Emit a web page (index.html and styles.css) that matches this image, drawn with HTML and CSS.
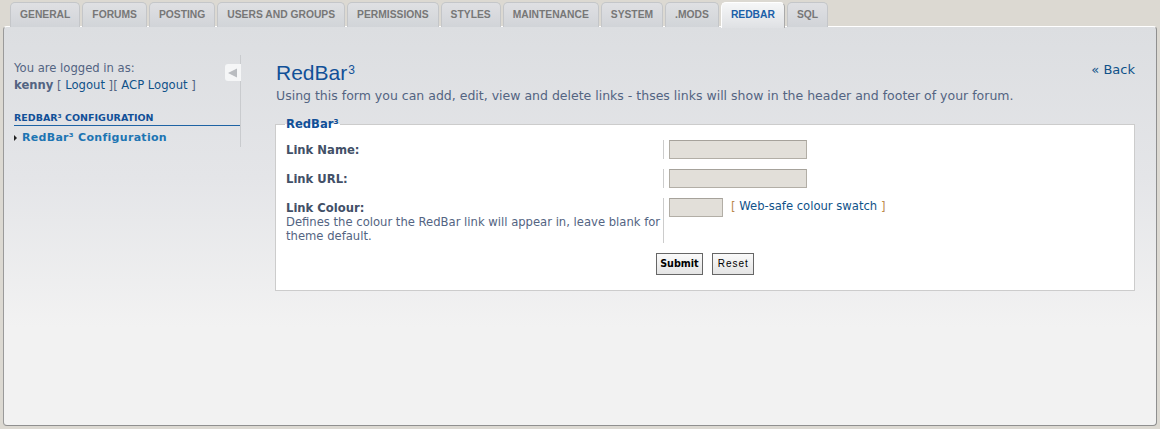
FILE: index.html
```html
<!DOCTYPE html>
<html>
<head>
<meta charset="utf-8">
<link rel="stylesheet" href="styles.css">
</head>
<body>
<div class="tabs">
  <span class="tab">General</span>
  <span class="tab">Forums</span>
  <span class="tab">Posting</span>
  <span class="tab">Users and groups</span>
  <span class="tab">Permissions</span>
  <span class="tab">Styles</span>
  <span class="tab">Maintenance</span>
  <span class="tab">System</span>
  <span class="tab">.Mods</span>
  <span class="tab active">Redbar</span>
  <span class="tab">SQL</span>
</div>
<div class="panel">
  <div class="menu">
    <p class="logged">You are logged in as:<br><b>kenny</b> [ <a>Logout</a> ][ <a>ACP Logout</a> ]</p>
    <div class="toggle"><svg width="12" height="10" viewBox="0 0 12 10"><path d="M1 5 L10 0.5 L10 9.5 Z" fill="#b9bcc0"/></svg></div>
    <div class="menu-head">RedBar³ Configuration</div>
    <div class="menu-item"><span class="arrow"></span>RedBar³ Configuration</div>
  </div>
  <div class="main">
    <div class="titlebar">
      <h1>RedBar<sup>3</sup></h1>
      <a class="back">« Back</a>
    </div>
    <p class="intro">Using this form you can add, edit, view and delete links - thses links will show in the header and footer of your forum.</p>
    <fieldset class="box">
      <legend>RedBar³</legend>
      <div class="row">
        <div class="dt"><label>Link Name:</label></div>
        <div class="dd"><span class="input"></span></div>
      </div>
      <div class="row">
        <div class="dt"><label>Link URL:</label></div>
        <div class="dd"><span class="input"></span></div>
      </div>
      <div class="row tall">
        <div class="dt"><label>Link Colour:</label><span class="explain">Defines the colour the RedBar link will appear in, leave blank for theme default.</span></div>
        <div class="dd"><span class="input small"></span><span class="swatch">[ <a>Web-safe colour swatch</a> ]</span></div>
      </div>
      <div class="buttons">
        <span class="btn submit">Submit</span>
        <span class="btn reset">Reset</span>
      </div>
    </fieldset>
  </div>
</div>
</body>
</html>
```

FILE: styles.css
```css
html, body {
  margin: 0;
  padding: 0;
}
body {
  background: #dcd9d2;
  font-family: "DejaVu Sans", Verdana, sans-serif;
  font-size: 11.6px;
  color: #536482;
  width: 1160px;
  height: 429px;
  overflow: hidden;
}
a { color: #105289; text-decoration: none; }

.tabs {
  display: flex;
  gap: 2px;
  padding: 2px 0 0 10px;
  height: 24px;
  position: relative;
  z-index: 2;
}
.tab {
  font-family: "Liberation Sans", Arial, sans-serif;
  font-weight: bold;
  font-size: 10.3px;
  text-transform: uppercase;
  color: #777;
  padding: 0 9px;
  line-height: 24px;
  height: 24px;
  background: linear-gradient(#dfe0e3, #d1d4d8);
  border: 1px solid #c4c6c9;
  border-bottom: none;
  border-radius: 5px 5px 0 0;
}
.tab.active {
  background: linear-gradient(#f6f7f8, #dfe1e4);
  border-color: #ffffff #aaa #aaa #ffffff;
  color: #1b5fa8;
  height: 25px;
}

.panel {
  margin: 0 3px;
  height: 400px;
  box-sizing: border-box;
  background: linear-gradient(#dcdee1 0px, #e4e5e8 150px, #f2f2f2 300px, #f2f2f2);
  border: 1px solid #8f8f8f;
  border-top-color: #ffffff;
  border-left-color: #9a9a9a;
  border-radius: 4px;
  display: flex;
  padding-top: 28px;
}

.menu {
  width: 226px;
  padding: 5px 0 0 10px;
  height: 87px;
  border-right: 1px solid #c9cbce;
  position: relative;
  flex: none;
}
.logged {
  margin: 0;
  line-height: 17px;
}
.logged b { color: #536482; }
.toggle {
  position: absolute;
  right: -1px;
  top: 9px;
  width: 16px;
  height: 17px;
  background: #f5f6f7;
  border-radius: 3px 0 0 3px;
  display: flex;
  align-items: center;
  justify-content: center;
}
.menu-head {
  margin-top: 17px;
  font-size: 9.5px;
  font-weight: bold;
  text-transform: uppercase;
  color: #115098;
  border-bottom: 1px solid #1e63a4;
  padding-bottom: 1px;
  line-height: 13px;
}
.menu-item {
  margin-top: 4px;
  font-size: 11px;
  font-weight: bold;
  color: #1d75b3;
  line-height: 16px;
  display: flex;
  align-items: center;
  letter-spacing: 0.3px;
}
.arrow {
  width: 0;
  height: 0;
  border-left: 3px solid #222;
  border-top: 3px solid transparent;
  border-bottom: 3px solid transparent;
  margin-right: 5px;
}

.main {
  flex: 1;
  padding: 0 21px 0 34px;
}
.titlebar {
  display: flex;
  justify-content: space-between;
  align-items: flex-start;
}
h1 {
  margin: 6px 0 0 1px;
  font-family: "Liberation Sans", Arial, sans-serif;
  font-weight: normal;
  font-size: 21px;
  line-height: 24px;
  color: #115098;
}
h1 sup {
  font-size: 12px;
  vertical-align: top;
  position: relative;
  top: -3px;
  margin-left: 1px;
}
.back {
  font-size: 13px;
  margin-top: 7px;
  line-height: 16px;
}
.intro {
  margin: 3px 0 0 1px;
  line-height: 16px;
  font-size: 12.5px;
}

.box {
  margin: 13px 0 0 0;
  padding: 9px 10px 15px 10px;
  border: 1px solid #cccccc;
  background: #ffffff;
  border-radius: 0;
}
.box legend {
  font-weight: bold;
  color: #115098;
  padding: 0 1px;
  margin-left: -1px;
  font-size: 11.6px;
}
.row {
  display: flex;
  margin-bottom: 10px;
}
.dt {
  width: 377px;
  flex: none;
  padding-top: 3px;
}
.dt label {
  display: block;
  font-weight: bold;
  color: #425067;
  line-height: 14px;
}
.explain {
  display: block;
  line-height: 14px;
}
.dd {
  border-left: 1px solid #cccccc;
  padding-left: 5px;
  display: flex;
  align-items: flex-start;
  min-height: 19px;
}
.row.tall .dd { min-height: 42px; }
.input {
  display: block;
  width: 136px;
  height: 17px;
  background: #e2dfd9;
  border: 1px solid #b2aea6;
  border-top-color: #a6a29b;
}
.input.small { width: 52px; }
.swatch {
  margin-left: 8px;
  color: #bc8a4d;
  line-height: 17px;
}
.buttons {
  display: flex;
  justify-content: center;
  gap: 9px;
  margin-top: 10px;
}
.btn {
  display: block;
  height: 20px;
  line-height: 20px;
  border: 1px solid #666;
  background: linear-gradient(#fafafa, #e4e4e4);
  color: #000;
  font-size: 10px;
  padding: 0 4px;
}
.btn.submit { font-weight: bold; padding: 0 3px; font-size: 9.6px; }
.btn.reset { letter-spacing: 1px; padding: 0 4px 0 5px; font-family: "Liberation Sans", Arial, sans-serif; }
```
